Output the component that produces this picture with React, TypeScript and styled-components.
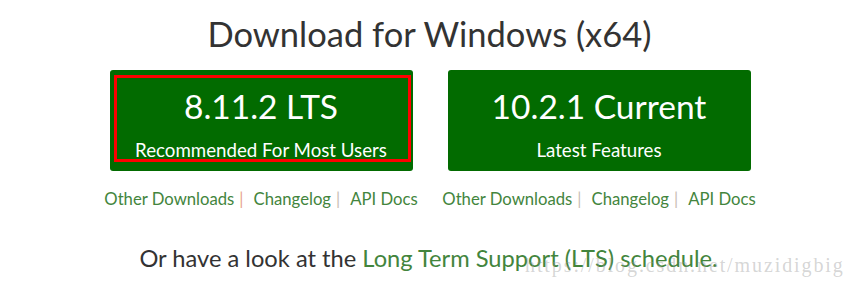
import React from 'react';
import styled, {createGlobalStyle} from "styled-components";

const GlobalStyle = createGlobalStyle`
  body {
    margin: 0;
    background: #fff;
    font-family: Lato, "Open Sans", sans-serif;
    color: #333;
  }
`

const releases = [
    {version: '8.11.2 LTS', note: 'Recommended For Most Users', marked: true},
    {version: '10.2.1 Current', note: 'Latest Features', marked: false},
]

const App = () => {
    return (
        <>
            <GlobalStyle/>
            <Page>
                <Title>Download for Windows (x64)</Title>
                <Releases>
                    {releases.map(r => (
                        <Release key={r.version}>
                            <DownloadButton>
                                <Version>{r.version}</Version>
                                <Note>{r.note}</Note>
                                {r.marked ? <Marker/> : ''}
                            </DownloadButton>
                            <Links>
                                <Link>Other Downloads</Link>
                                <Sep $warm={r.marked}>|</Sep>
                                <Link>Changelog</Link>
                                <Sep>|</Sep>
                                <Link>API Docs</Link>
                            </Links>
                        </Release>
                    ))}
                </Releases>
                <Schedule>
                    Or have a look at the <Link>Long Term Support (LTS) schedule.</Link>
                </Schedule>
                <Watermark>https://blog.csdn.net/muzidigbig</Watermark>
            </Page>
        </>
    );
};

const Page = styled.div`
  position: relative;
  width: 857px;
  height: 286px;
  display: flex;
  flex-direction: column;
  align-items: center;
  overflow: hidden;
`
const Title = styled.h1`
  margin: 12px 0 0 2px;
  font-size: 34.5px;
  font-weight: 400;
  line-height: 44px;
  color: #333;
`
const Releases = styled.div`
  display: flex;
  gap: 35px;
  margin: 14px 0 0 3px;
`
const Release = styled.div`
  display: flex;
  flex-direction: column;
  align-items: center;
  width: 303px;
`
const DownloadButton = styled.div`
  position: relative;
  width: 303px;
  height: 101px;
  border-radius: 3px;
  background-color: #026b00;
  color: #fff;
  display: flex;
  flex-direction: column;
  align-items: center;
  box-sizing: border-box;
  padding-top: 16px;
`
const Version = styled.div`
  font-size: 33.5px;
  line-height: 40px;
`
const Note = styled.div`
  font-size: 18.7px;
  line-height: 24px;
  margin-top: 12px;
`
const Marker = styled.div`
  position: absolute;
  left: 4px;
  top: 5px;
  right: 2px;
  bottom: 9px;
  border: 3px solid #f00;
`
const Links = styled.div`
  display: flex;
  align-items: center;
  white-space: nowrap;
  margin-top: 16px;
  font-size: 16.7px;
  line-height: 24px;
`
const Link = styled.span`
  color: #43853d;
`
const Sep = styled.span<{ $warm?: boolean }>`
  color: ${p => p.$warm ? '#e8a48c' : '#c9bdb4'};
  margin: 0 10px 0 5px;
`
const Schedule = styled.div`
  margin-top: 32px;
  font-size: 23.7px;
  line-height: 30px;
  white-space: nowrap;
`
const Watermark = styled.div`
  position: absolute;
  left: 525px;
  top: 254px;
  font-family: "Liberation Serif", serif;
  font-size: 20px;
  letter-spacing: 1.9px;
  color: rgba(150, 150, 150, 0.4);
`

export default App;
